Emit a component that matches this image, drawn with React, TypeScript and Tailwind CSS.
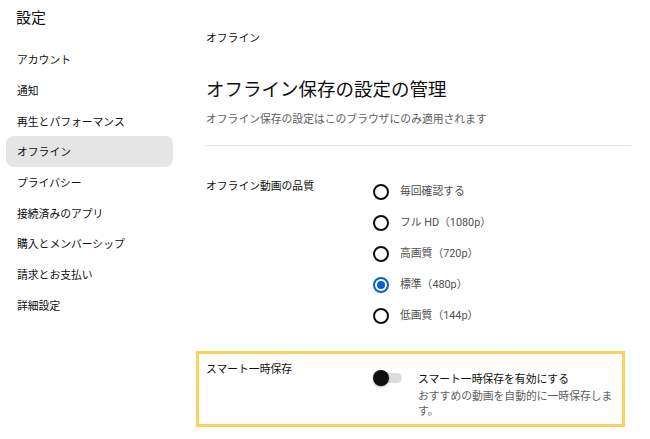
import { useState } from 'react'

const navItems = [
  'アカウント',
  '通知',
  '再生とパフォーマンス',
  'オフライン',
  'プライバシー',
  '接続済みのアプリ',
  '購入とメンバーシップ',
  '請求とお支払い',
  '詳細設定',
]

const qualities = [
  '毎回確認する',
  'フル HD（1080p）',
  '高画質（720p）',
  '標準（480p）',
  '低画質（144p）',
]

export default function App() {
  const [quality, setQuality] = useState(3)
  const [smart, setSmart] = useState(false)

  return (
    <div
      className="flex h-[439px] w-[650px] overflow-hidden bg-white text-[#0f0f0f]"
      style={{ fontFamily: 'Roboto, "Noto Sans CJK JP", sans-serif' }}
    >
      <aside className="w-[179px] shrink-0 pt-[8px]">
        <h1 className="pl-[16px] text-[15px] leading-[20px]">設定</h1>
        <nav className="mt-[16px] flex flex-col">
          {navItems.map((item) => (
            <a
              key={item}
              href="#"
              className={
                'mx-[6px] flex h-[30.7px] items-center rounded-[8px] pl-[11px] pt-[4px] text-[10.8px] ' +
                (item === 'オフライン' ? 'bg-[#e5e5e5]' : '')
              }
            >
              {item}
            </a>
          ))}
        </nav>
      </aside>

      <main className="flex-1 pl-[27px] pr-[19px] pt-[31px]">
        <p className="text-[10.8px] leading-[16px]">オフライン</p>
        <h2 className="mt-[30px] text-[18.5px] leading-[26px]">
          オフライン保存の設定の管理
        </h2>
        <p className="mt-[9px] text-[10.8px] leading-[16px] text-[#606060]">
          オフライン保存の設定はこのブラウザにのみ適用されます
        </p>
        <div className="mt-[17px] h-px bg-[#e5e5e5]" />

        <section className="mt-[30px] flex">
          <div className="mt-[3px] w-[167px] shrink-0 text-[10.8px] leading-[16px]">
            オフライン動画の品質
          </div>
          <div className="flex flex-col">
            {qualities.map((q, i) => (
              <label
                key={q}
                className="flex h-[31px] cursor-pointer items-center gap-[11px]"
                onClick={() => setQuality(i)}
              >
                <span
                  className={
                    'flex size-[16px] items-center justify-center rounded-full border-2 ' +
                    (quality === i ? 'border-[#065fd4]' : 'border-[#0f0f0f]')
                  }
                >
                  {quality === i && (
                    <span className="size-[8px] rounded-full bg-[#065fd4]" />
                  )}
                </span>
                <span className="pt-[2px] text-[10.8px] text-[#505050]">{q}</span>
              </label>
            ))}
          </div>
        </section>

        <section className="-ml-[10px] mt-[20px] flex w-[429px] border-[3px] border-[#fcd35a] pb-[5px] pl-[7px] pt-[7px]">
          <div className="mt-[1px] w-[167px] shrink-0 text-[10.8px] leading-[16px]">
            スマート一時保存
          </div>
          <div className="flex items-start">
            <button
              type="button"
              onClick={() => setSmart(!smart)}
              className="relative mt-[9px] h-[16px] w-[29px] shrink-0"
              aria-pressed={smart}
            >
              <span
                className={
                  'absolute left-[3px] top-[3px] h-[10px] w-[26px] rounded-full ' +
                  (smart ? 'bg-[#a7c7f2]' : 'bg-[#dcdcdc]')
                }
              />
              <span
                className={
                  'absolute top-0 size-[16px] rounded-full shadow-[0_1px_2px_rgba(0,0,0,0.35)] ' +
                  (smart ? 'left-[13px] bg-[#065fd4]' : 'left-0 bg-[#0f0f0f]')
                }
              />
            </button>
            <div className="ml-[16px] mt-[11px] w-[200px]">
              <p className="text-[10.8px] leading-[16px]">
                スマート一時保存を有効にする
              </p>
              <p className="mt-[1px] text-[10.8px] leading-[15px] text-[#606060]">
                おすすめの動画を自動的に一時保存します。
              </p>
            </div>
          </div>
        </section>
      </main>
    </div>
  )
}
